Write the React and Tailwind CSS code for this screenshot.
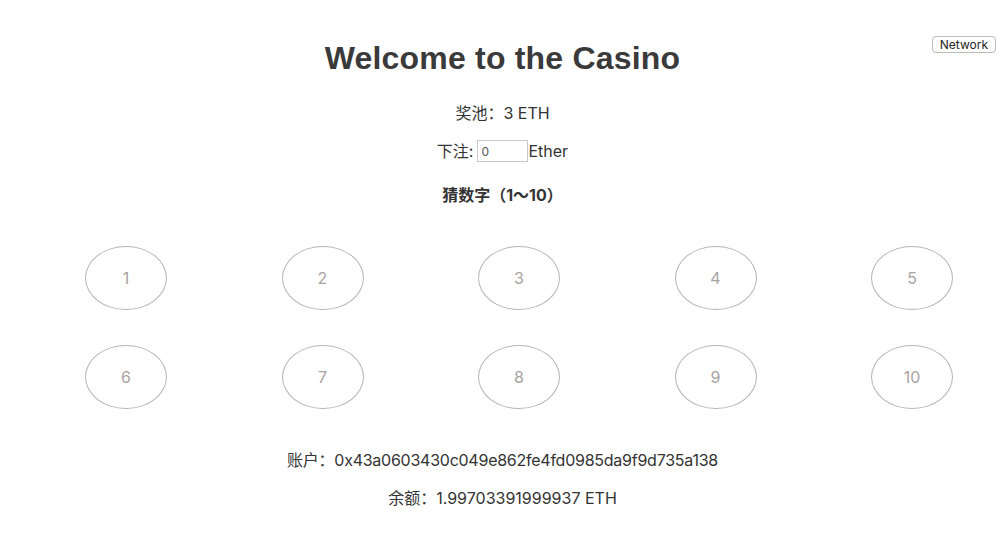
const NUMS = [1, 2, 3, 4, 5, 6, 7, 8, 9, 10];

export default function App() {
  return (
    <div
      className="relative min-h-[554px] bg-white text-[#333] text-[16px]"
      style={{ fontFamily: "Inter, 'Noto Sans CJK SC', sans-serif" }}
    >
      {/* Network button */}
      <button className="absolute right-[9px] top-[36px] h-[17px] px-[7px] border border-[#bbb] rounded-[4px] bg-white text-[12px] leading-[15px] text-[#222]">
        Network
      </button>

      <div className="flex flex-col items-center pt-[38px]">
        <h1
          className="text-[32px] leading-[40px] font-bold text-[#3a3a3a] tracking-[0.2px]"
          style={{ fontFamily: "'Liberation Sans', sans-serif" }}
        >
          Welcome to the Casino
        </h1>
        <p className="mt-[25px] leading-[20px]">奖池：3 ETH</p>
        <div className="mt-[17px] flex items-center leading-[20px]">
          <span>下注:</span>
          <input
            defaultValue="0"
            className="ml-[4px] w-[51px] h-[22px] border border-[#c8c8c8] px-[3px] text-[12px] text-[#555] outline-none"
          />
          <span>Ether</span>
        </div>
        <p className="mt-[23px] font-bold leading-[20px]">猜数字（1～10）</p>
      </div>

      {/* Number grid */}
      <div className="mt-[41px] pl-[85px] pr-[52px] flex flex-col gap-[35px]">
        {[NUMS.slice(0, 5), NUMS.slice(5)].map((row, i) => (
          <div key={i} className="flex justify-between">
            {row.map((n) => (
              <div
                key={n}
                className="w-[82px] h-[64px] rounded-[50%] border border-[#b5b5b5] flex items-center justify-center text-[#a9a3a3] text-[16px]"
              >
                {n}
              </div>
            ))}
          </div>
        ))}
      </div>

      <div className="flex flex-col items-center mt-[41px] leading-[20px]">
        <p className="tracking-[-0.25px]">账户：0x43a0603430c049e862fe4fd0985da9f9d735a138</p>
        <p className="mt-[18px]">余额：1.99703391999937 ETH</p>
      </div>
    </div>
  );
}
